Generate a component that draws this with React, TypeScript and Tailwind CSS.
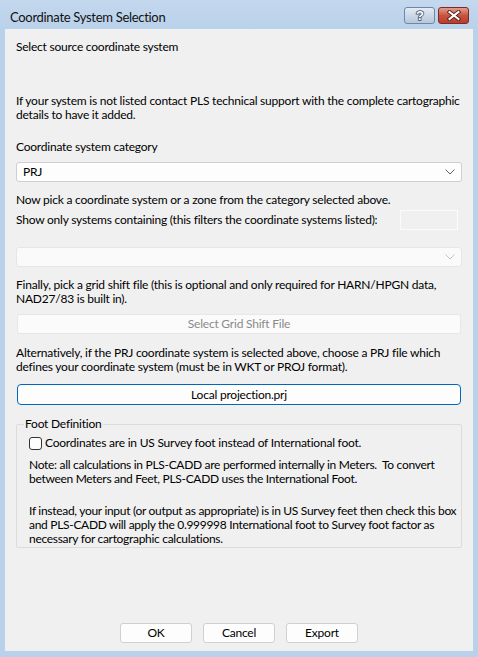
import { useState } from 'react';

// Coordinate system picker dialog, drawn in the classic Windows 7 frame.

function Chevron({ disabled }: { disabled?: boolean }) {
    return (
        <svg width="10" height="6" viewBox="0 0 10 6" className="shrink-0">
            <path d="M0.5 0.5 L5 5 L9.5 0.5" fill="none" stroke={disabled ? '#c4c4c4' : '#5f5f5f'} strokeWidth="1" />
        </svg>
    );
}

function ComboBox({ value, disabled }: { value?: string; disabled?: boolean }) {
    return (
        <div
            className={
                disabled
                    ? 'h-[20px] flex items-center justify-between pl-[6px] pr-[6px] rounded-[3px] border border-[#e6e6e6] bg-[#fafafa]'
                    : 'h-[20px] flex items-center justify-between pl-[6px] pr-[6px] rounded-[3px] border border-[#cfcfcf] bg-[#fdfdfd]'
            }
        >
            <span>{value}</span>
            <Chevron disabled={disabled} />
        </div>
    );
}

function DialogButton({ label }: { label: string }) {
    return (
        <button className="w-[72px] h-[20px] rounded-[3px] border border-[#d0d0d0] bg-[#fdfdfd] leading-[18px]">
            {label}
        </button>
    );
}

function CaptionButtons() {
    return (
        <div className="flex gap-[3px] mt-[1px]">
            <div className="w-[31px] h-[17px] rounded-[3px] border border-[#6f87a5] bg-gradient-to-b from-[#e3ebf5] via-[#cbd8e8] to-[#b7c8dc] flex items-center justify-center">
                <svg width="14" height="14" viewBox="0 0 14 14">
                    <text
                        x="7"
                        y="12"
                        textAnchor="middle"
                        fontFamily="Liberation Sans, sans-serif"
                        fontWeight="bold"
                        fontSize="13"
                        fill="#ffffff"
                        stroke="#3d4f66"
                        strokeWidth="1.6"
                        paintOrder="stroke"
                    >
                        ?
                    </text>
                </svg>
            </div>
            <div className="w-[31px] h-[17px] rounded-[3px] border border-[#7b2b24] bg-gradient-to-b from-[#e29c8f] via-[#c8533f] to-[#b83d2a] flex items-center justify-center">
                <svg width="14" height="11" viewBox="0 0 14 11">
                    <path d="M2.5 2 L11.5 9 M11.5 2 L2.5 9" stroke="#5a2320" strokeWidth="4" strokeLinecap="square" />
                    <path d="M2.5 2 L11.5 9 M11.5 2 L2.5 9" stroke="#ffffff" strokeWidth="2" strokeLinecap="square" />
                </svg>
            </div>
        </div>
    );
}

export default function App() {
    const [usFoot, setUsFoot] = useState(false);

    return (
        <div className="w-[478px] h-[657px] bg-[#b9d1ea] flex flex-col font-['Lato',sans-serif] text-[12px] text-black whitespace-nowrap">
            {/* caption */}
            <div className="h-[29px] flex items-center justify-between pl-[10px] pr-[9px] bg-gradient-to-b from-[#c4d8ee] to-[#b9d1ea]">
                <span className="text-[13px] tracking-[-0.3px] text-[#111] mt-[6px]">Coordinate System Selection</span>
                <CaptionButtons />
            </div>

            {/* client area */}
            <div className="flex-1 mx-[5px] mb-[6px] bg-[#f0f0f0] flex flex-col px-[11px] pt-[10px] pb-[8px] leading-[14px] tracking-[-0.22px]">
                <p className="leading-[15px]">Select source coordinate system</p>

                <p className="mt-[40px]">
                    If your system is not listed contact PLS technical support with the complete cartographic
                    <br />
                    details to have it added.
                </p>

                <p className="mt-[18px]">Coordinate system category</p>
                <div className="mt-[8px]">
                    <ComboBox value="PRJ" />
                </div>

                <p className="mt-[11px]">Now pick a coordinate system or a zone from the category selected above.</p>

                <div className="mt-[3px] h-[20px] flex items-center justify-between">
                    <span>Show only systems containing (this filters the coordinate systems listed):</span>
                    <div className="w-[58px] h-[20px] mr-[4px] border border-[#fbfbfb] bg-[#f0f0f0]" />
                </div>

                <div className="mt-[17px]">
                    <ComboBox disabled />
                </div>

                <p className="mt-[11px]">
                    Finally, pick a grid shift file (this is optional and only required for HARN/HPGN data,
                    <br />
                    NAD27/83 is built in).
                </p>

                <button className="mt-[8px] mx-[1px] h-[20px] rounded-[3px] border border-[#e7e7e7] bg-[#fbfbfb] text-[#8a8a8a] leading-[18px]">
                    Select Grid Shift File
                </button>

                <p className="mt-[12px]">
                    Alternatively, if the PRJ coordinate system is selected above, choose a PRJ file which
                    <br />
                    defines your coordinate system (must be in WKT or PROJ format).
                </p>

                <button className="mt-[10px] mx-[1px] h-[21px] rounded-[4px] border border-[#0067c0] bg-[#fdfdfd] leading-[19px]">
                    Local projection.prj
                </button>

                <fieldset className="mt-[12px] min-w-0 border border-[#dcdcdc] rounded-[2px] pl-[12px] pr-[2px] pb-[1px] tracking-[-0.3px]">
                    <legend className="ml-[-5px] px-[1px] leading-[14px] tracking-[-0.22px]">Foot Definition</legend>

                    <label className="mt-[5px] flex items-center gap-[3px] h-[14px]">
                        <input
                            type="checkbox"
                            checked={usFoot}
                            onChange={(e) => setUsFoot(e.target.checked)}
                            className="appearance-none w-[13px] h-[13px] rounded-[3px] border border-[#333] bg-[#fdfdfd]"
                        />
                        <span className="tracking-[-0.22px]">Coordinates are in US Survey foot instead of International foot.</span>
                    </label>

                    <p className="mt-[8px]">
                        Note: all calculations in PLS-CADD are performed internally in Meters.&nbsp; To convert
                        <br />
                        between Meters and Feet, PLS-CADD uses the International Foot.
                    </p>

                    <p className="mt-[18px]">
                        If instead, your input (or output as appropriate) is in US Survey feet then check this box
                        <br />
                        and PLS-CADD will apply the 0.999998 International foot to Survey foot factor as
                        <br />
                        necessary for cartographic calculations.
                    </p>
                </fieldset>

                <div className="mt-auto flex justify-center gap-[11px]">
                    <DialogButton label="OK" />
                    <DialogButton label="Cancel" />
                    <DialogButton label="Export" />
                </div>
            </div>
        </div>
    );
}
